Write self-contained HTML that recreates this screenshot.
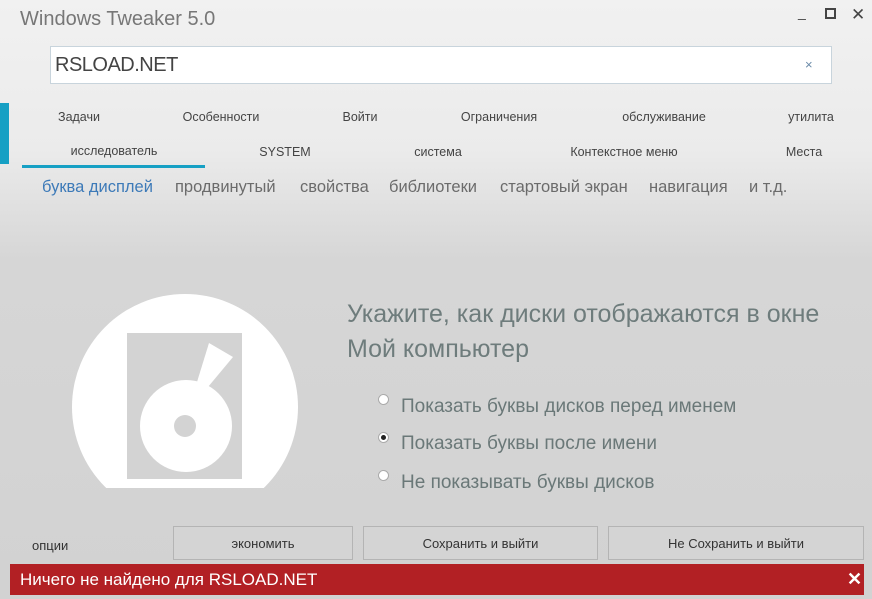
<!DOCTYPE html>
<html><head><meta charset="utf-8"><style>
*{margin:0;padding:0;box-sizing:border-box}
body{width:872px;height:599px;overflow:hidden;position:relative;font-family:"Liberation Sans",sans-serif;background:linear-gradient(#f1f1f1 0px,#ebebeb 150px,#d6d6d6 260px,#d2d2d2 599px)}
.a{position:absolute;white-space:nowrap}
.t{font-size:12.5px;color:#444;transform:translateX(-50%)}
.s{font-size:16.5px;color:#6b6b6b;top:178px}
.r{font-size:19px;color:#6a7878;left:401px}
.rb{position:absolute;left:378px;width:11px;height:11px;border-radius:50%;background:#fff;border:1px solid #aaa}
.btn{position:absolute;top:526px;height:34px;border:1px solid #b4b4b4;background:#d4d4d4;font-size:13px;color:#333;text-align:center;line-height:34px}
</style></head><body>
<div class="a" style="left:20px;top:8px;font-size:20px;color:#777">Windows Tweaker 5.0</div>
<div class="a" style="left:798px;top:4px;font-size:14px;color:#444">_</div>
<div class="a" style="left:825px;top:8px;width:11px;height:11px;border:2px solid #444"></div>
<div class="a" style="left:851px;top:5px;font-size:17px;color:#444">✕</div>
<div class="a" style="left:50px;top:46px;width:782px;height:38px;background:#fff;border:1px solid #c8d4dc"></div>
<div class="a" style="left:55px;top:54px;font-size:20px;color:#444;letter-spacing:-0.5px">RSLOAD.NET</div>
<div class="a" style="left:805px;top:57px;font-size:13px;color:#6a8aa8">×</div>
<div class="a" style="left:0;top:103px;width:9px;height:61px;background:#16a0c4"></div>
<div class="a t" style="left:79px;top:110px">Задачи</div>
<div class="a t" style="left:221px;top:110px">Особенности</div>
<div class="a t" style="left:360px;top:110px">Войти</div>
<div class="a t" style="left:499px;top:110px">Ограничения</div>
<div class="a t" style="left:664px;top:110px">обслуживание</div>
<div class="a t" style="left:811px;top:110px">утилита</div>
<div class="a t" style="left:114px;top:144px">исследователь</div>
<div class="a t" style="left:285px;top:145px">SYSTEM</div>
<div class="a t" style="left:438px;top:145px">система</div>
<div class="a t" style="left:624px;top:145px">Контекстное меню</div>
<div class="a t" style="left:804px;top:145px">Места</div>
<div class="a" style="left:22px;top:165px;width:183px;height:3px;background:#16a0c4"></div>
<div class="a s" style="left:42px;color:#3d7ab8">буква дисплей</div>
<div class="a s" style="left:175px">продвинутый</div>
<div class="a s" style="left:300px">свойства</div>
<div class="a s" style="left:389px">библиотеки</div>
<div class="a s" style="left:500px">стартовый экран</div>
<div class="a s" style="left:649px">навигация</div>
<div class="a s" style="left:749px">и т.д.</div>
<svg class="a" style="left:0;top:0" width="340" height="520">
<defs><clipPath id="c"><rect x="0" y="0" width="340" height="488"/></clipPath></defs>
<circle cx="185" cy="407" r="113" fill="#fff" clip-path="url(#c)"/>
<rect x="127" y="333" width="115" height="146" fill="#d3d3d3"/>
<circle cx="186" cy="426" r="46" fill="#fff"/>
<circle cx="185" cy="426" r="11" fill="#d3d3d3"/>
<polygon points="209,343 233,357 208,387 197,382" fill="#fff"/>
</svg>
<div class="a" style="left:347px;top:297px;font-size:25px;color:#6e7c7c;line-height:35px">Укажите, как диски отображаются в окне<br>Мой компьютер</div>
<div class="rb" style="top:394px"></div>
<div class="rb" style="top:432px"><div style="width:5px;height:5px;border-radius:50%;background:#222;margin:2px"></div></div>
<div class="rb" style="top:470px"></div>
<div class="a r" style="top:396px">Показать буквы дисков перед именем</div>
<div class="a r" style="top:433px">Показать буквы после имени</div>
<div class="a r" style="top:472px">Не показывать буквы дисков</div>
<div class="a" style="left:32px;top:538px;font-size:13px;color:#333">опции</div>
<div class="btn" style="left:173px;width:180px">экономить</div>
<div class="btn" style="left:363px;width:235px">Сохранить и выйти</div>
<div class="btn" style="left:608px;width:256px">Не Сохранить и выйти</div>
<div class="a" style="left:10px;top:564px;width:854px;height:31px;background:#b22024"></div>
<div class="a" style="left:20px;top:570px;font-size:17px;color:#fff">Ничего не найдено для RSLOAD.NET</div>
<div class="a" style="left:847px;top:569px;font-size:18px;color:#fff;font-weight:bold">✕</div>
</body></html>
